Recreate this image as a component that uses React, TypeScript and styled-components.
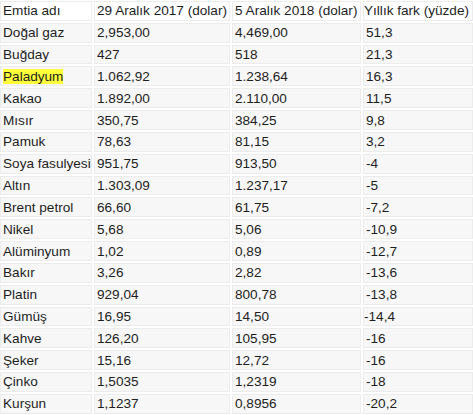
import React from "react";
import styled, { createGlobalStyle } from "styled-components";

const Global = createGlobalStyle`
  html, body { margin: 0; padding: 0; background: #ffffff; }
  body { font-family: "Liberation Sans", Arial, Helvetica, sans-serif; }
`;

const Table = styled.table`
  border-collapse: separate;
  border-spacing: 2px;
  margin: -1px 0 0 -2px;
  font-size: 13.6px;
  color: #1e1e1e;
  table-layout: fixed;
  width: 477px;
`;

const Col = styled.col<{ $w: number }>`
  width: ${(p) => p.$w}px;
`;

const Cell = styled.td<{ $head?: boolean; $tight?: boolean }>`
  height: 19.83px;
  padding: 0 0 0 ${(p) => (p.$tight ? 0 : 2)}px;
  background: ${(p) => (p.$head ? "#ffffff" : "#f7f7f7")};
  border: 1px solid #ececec;
  white-space: nowrap;
  overflow: visible;
  box-sizing: border-box;
  line-height: 15px;
  vertical-align: middle;
`;

const Mark = styled.span`
  background: #ffff3a;
`;

type Row = [string, string, string, string];

const rows: Row[] = [
  ["Doğal gaz", "2,953,00", "4,469,00", "51,3"],
  ["Buğday", "427", "518", "21,3"],
  ["Paladyum", "1.062,92", "1.238,64", "16,3"],
  ["Kakao", "1.892,00", "2.110,00", "11,5"],
  ["Mısır", "350,75", "384,25", "9,8"],
  ["Pamuk", "78,63", "81,15", "3,2"],
  ["Soya fasulyesi", "951,75", "913,50", "-4"],
  ["Altın", "1.303,09", "1.237,17", "-5"],
  ["Brent petrol", "66,60", "61,75", "-7,2"],
  ["Nikel", "5,68", "5,06", "-10,9"],
  ["Alüminyum", "1,02", "0,89", "-12,7"],
  ["Bakır", "3,26", "2,82", "-13,6"],
  ["Platin", "929,04", "800,78", "-13,8"],
  ["Gümüş", "16,95", "14,50", "-14,4"],
  ["Kahve", "126,20", "105,95", "-16"],
  ["Şeker", "15,16", "12,72", "-16"],
  ["Çinko", "1,5035", "1,2319", "-18"],
  ["Kurşun", "1,1237", "0,8956", "-20,2"],
];

export default function App() {
  return (
    <>
      <Global />
      <Table>
        <colgroup>
          <Col $w={92} />
          <Col $w={136} />
          <Col $w={129} />
          <Col $w={110} />
        </colgroup>
        <tbody>
          <tr>
            <Cell $head>Emtia adı</Cell>
            <Cell $head>29 Aralık 2017 (dolar)</Cell>
            <Cell $head>5 Aralık 2018 (dolar)</Cell>
            <Cell $head $tight>Yıllık fark (yüzde)</Cell>
          </tr>
          {rows.map((r) => (
            <tr key={r[0]}>
              <Cell>{r[0] === "Paladyum" ? <Mark>{r[0]}</Mark> : r[0]}</Cell>
              <Cell>{r[1]}</Cell>
              <Cell>{r[2]}</Cell>
              <Cell $tight={r[0] === "Gümüş"}>{r[3]}</Cell>
            </tr>
          ))}
        </tbody>
      </Table>
    </>
  );
}
